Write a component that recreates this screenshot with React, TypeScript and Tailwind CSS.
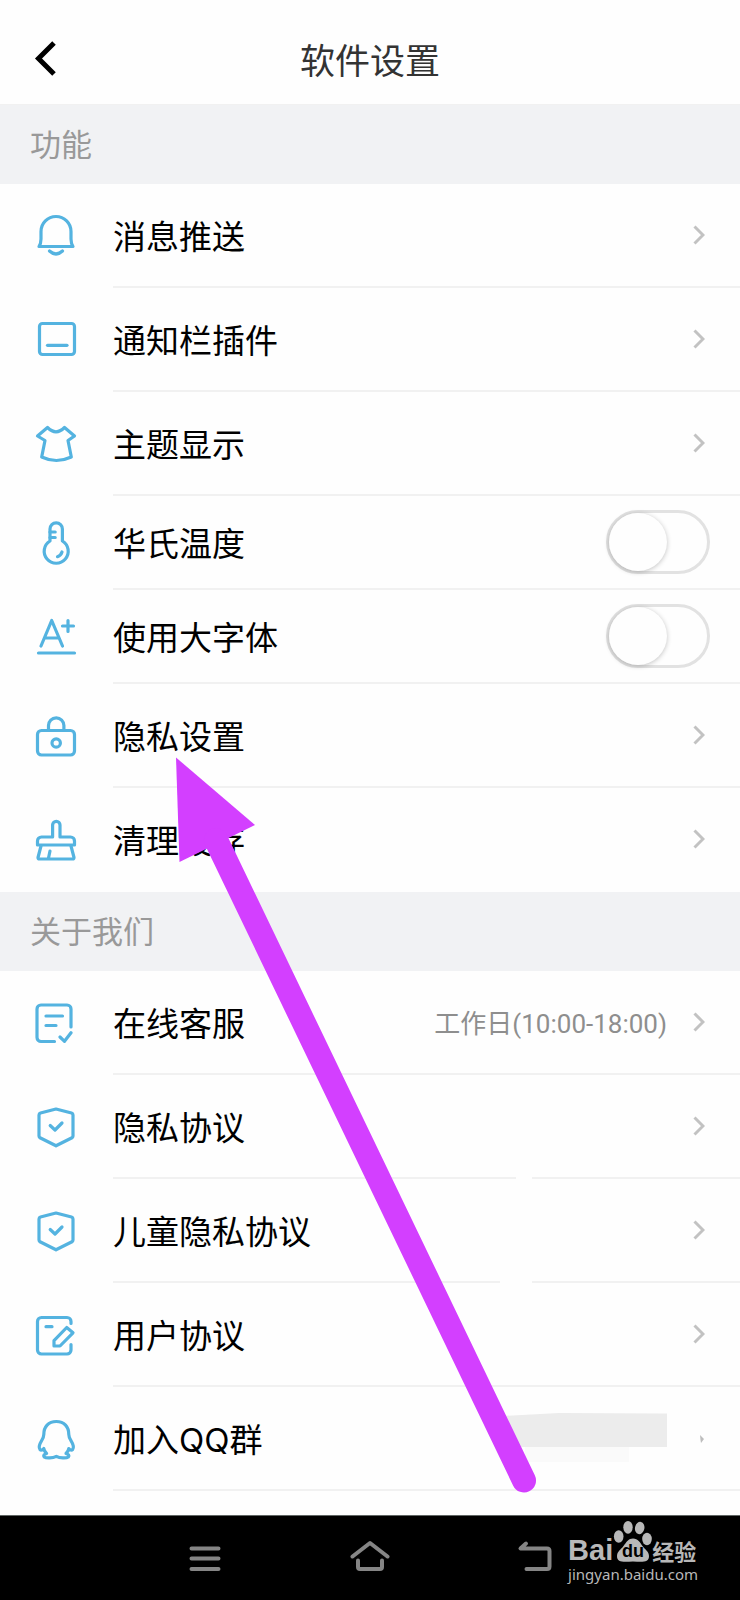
import React from 'react';

type Item = {
   label: string;
   icon: React.ReactNode;
   kind?: 'link' | 'switch';
   detail?: React.ReactNode;
   tinyArrow?: boolean;
   gap?: string;
};

const Icon = ({ children }: { children: React.ReactNode }) => (
   <svg
      viewBox="0 0 48 48"
      className="w-12 h-12 shrink-0 text-[#54b3e0]"
      fill="none"
      stroke="currentColor"
      strokeWidth="3.2"
      strokeLinecap="round"
      strokeLinejoin="round"
      aria-hidden="true"
   >
      {children}
   </svg>
);

const Bell = () => (
   <Icon>
      <path d="M7 34.500C8.600 32 9 30 9 27V19.500a15 15 0 0 1 30 0V27c0 3 .4 5 2 7.500Z" />
      <path d="M17.500 39q6.500 6 13 0" />
   </Icon>
);

const Panel = () => (
   <Icon>
      <rect x="7.500" y="7.500" width="35" height="31" rx="3" />
      <path d="M15.500 29.300H35" />
   </Icon>
);

const Shirt = () => (
   <Icon>
      <path d="M15.500 7.500q8.500 8.500 17 0L42.500 16 36 20.500l3.300 16.500q-15 7-29.600 0L13 20.500 5.500 16Z" />
   </Icon>
);

const Thermometer = () => (
   <Icon>
      <path d="M18 22V10a6.200 6.200 0 0 1 12.400 0v12a12 12 0 1 1-12.400 0Z" />
      <path d="M18 13h5.200M18 18.500h5.200M30 33q-1 3.500-4.500 4.700" />
   </Icon>
);

const LargeFont = () => (
   <Icon>
      <path d="M9 33 19.700 7.500 30.500 33M12.500 25h14.500M36 7.500v11M30.500 13h11M6.500 40h36" />
   </Icon>
);

const Lock = () => (
   <Icon>
      <rect x="5.500" y="18.500" width="37" height="24.500" rx="4" />
      <path d="M16.500 18.500v-5a7.700 7.700 0 0 1 15.400 0v5" />
      <circle cx="24.200" cy="31" r="4.200" />
   </Icon>
);

const Brush = () => (
   <Icon>
      <path d="M20.600 21V9a3.700 3.700 0 0 1 7.400 0v12h10.500a4 4 0 0 1 4 4v4H5.500v-4a4 4 0 0 1 4-4Z" />
      <path d="M9 30 6 41.500q0 1.500 1.300 1.500h33.400q1.300 0 1.300-1.500L39 30M18 35l-1.700 8" />
   </Icon>
);

const Checklist = () => (
   <Icon>
      <path d="M22.500 42.500H9a4 4 0 0 1-4-4V10a4 4 0 0 1 4-4h26a4 4 0 0 1 4 4v18" />
      <path d="M14 17h16.500M14 26.500h10M28 38l4.500 4.300 6.500-8.500" />
   </Icon>
);

const Shield = () => (
   <Icon>
      <path d="M24 6 39.500 10q1.500.5 1.500 2V33q0 1.200-1 1.800L24 42.800 8 34.800q-1-.6-1-1.800V12q0-1.500 1.500-2Z" />
      <path d="M18.200 22.500l4.800 4.500 7-7" />
   </Icon>
);

const Pencil = () => (
   <Icon>
      <path d="M39 12.500V10.500a4 4 0 0 0-4-4H9.500a4 4 0 0 0-4 4V39a4 4 0 0 0 4 4H35a4 4 0 0 0 4-4V33.500" />
      <path d="M14 15.700h6M22 35v-5.300L34.700 16.500l6.300 5.300L28 35Z" />
   </Icon>
);

const Penguin = () => (
   <Icon>
      <path d="M24.300 6.500c-8 0-12.500 5.500-12.500 13 0 2.500-.8 4-2.300 6.300C7.200 29.500 6.500 32.500 8 34.500c1 1 2.500.5 3.800-1 .3 2 1.200 3.600 2.800 5-2.600.8-3.600 2-2.400 3.500 2 1.400 8.500 1.200 12.100-.6 3.600 1.800 10.100 2 12.100.6 1.200-1.500.2-2.700-2.400-3.500 1.600-1.400 2.500-3 2.800-5 1.300 1.500 2.800 2 3.800 1 1.500-2 .8-5-1.500-8.700-1.500-2.300-2.300-3.800-2.300-6.300 0-7.500-4.500-13-12.500-13Z" />
   </Icon>
);

// number hidden behind a grey smear
const Smear = () => (
   <svg viewBox="0 0 166 52" className="w-[166px] h-[52px]" aria-hidden="true">
      <path d="M24 35H128V50H24Z" fill="#fafafa" />
      <path d="M0 4 58 1 166 1.500V35H0Z" fill="#ececec" />
   </svg>
);

const functions: Item[] = [
   { label: '消息推送', icon: <Bell /> },
   { label: '通知栏插件', icon: <Panel /> },
   { label: '主题显示', icon: <Shirt /> },
   { label: '华氏温度', icon: <Thermometer />, kind: 'switch' },
   { label: '使用大字体', icon: <LargeFont />, kind: 'switch' },
   { label: '隐私设置', icon: <Lock /> },
   { label: '清理缓存', icon: <Brush /> },
];

const about: Item[] = [
   { label: '在线客服', icon: <Checklist />, detail: '工作日(10:00-18:00)' },
   { label: '隐私协议', icon: <Shield />, gap: 'right-[208px] w-4' },
   { label: '儿童隐私协议', icon: <Shield />, gap: 'right-[208px] w-8' },
   { label: '用户协议', icon: <Pencil /> },
   { label: '加入QQ群', icon: <Penguin />, detail: <Smear />, tinyArrow: true },
];

const Chevron = () => (
   <svg viewBox="0 0 12 20" className="w-3 h-5" fill="none" stroke="#c2c2c2" strokeWidth="3" aria-hidden="true">
      <path d="M1.500 1.500 10 10 1.500 18.500" />
   </svg>
);

const TinyArrow = () => (
   <svg viewBox="0 0 12 20" className="w-3 h-5" fill="#bdbdbd" aria-hidden="true">
      <path d="M7 7 11 11 8 15 7.500 12Z" />
   </svg>
);

const Row = ({ item, last }: { item: Item; last: boolean }) => {
   const line = last ? 'border-transparent' : 'border-[#f1f1f1]';

   if (item.kind === 'switch') {
      return (
         <li>
            <label className="flex items-center pl-8 h-[94px]">
               {item.icon}
               <span className={`flex flex-1 items-center justify-between h-full ml-[33px] pr-[30px] border-b-2 ${line}`}>
                  <span className="pt-1 text-[33px] leading-[48px] text-black">{item.label}</span>
                  <input
                     type="checkbox"
                     role="switch"
                     className="appearance-none w-[104px] h-16 rounded-full border-[3px] border-[#e2e2e2] before:block before:w-[58px] before:h-[58px] before:rounded-full before:bg-[#fefefe] before:shadow-[0_1px_5px_rgba(0,0,0,0.24)] checked:bg-[#54b3e0] checked:before:ml-10"
                  />
               </span>
            </label>
         </li>
      );
   }

   return (
      <li>
         <a href="#" className="flex items-center pl-8 h-[104px]">
            {item.icon}
            <span className={`relative flex flex-1 items-center justify-between h-full ml-[33px] pr-[35px] border-b-2 ${line}`}>
               <span className="pt-1 text-[33px] leading-[48px] text-black">{item.label}</span>
               <span className="flex items-center gap-[26px] text-[26px] text-[#8e8e8e] font-[Roboto,'Noto_Sans_CJK_SC',sans-serif]">
                  {typeof item.detail === 'string' ? <span className="pt-1">{item.detail}</span> : item.detail}
                  {item.tinyArrow ? <TinyArrow /> : <Chevron />}
               </span>
               {item.gap && <span className={`absolute -bottom-0.5 h-0.5 bg-[#fefefe] ${item.gap}`} />}
            </span>
         </a>
      </li>
   );
};

const Arrow = () => (
   <svg
      viewBox="176 757 362 737"
      className="absolute left-[176px] top-[757px] w-[362px] h-[737px] pointer-events-none"
      fill="#d33fff"
      aria-hidden="true"
   >
      <path d="M176 757.500 255 825 179.500 862Z" />
      <path d="M216 840 524 1480.500" stroke="#d33fff" strokeWidth="24" strokeLinecap="round" />
   </svg>
);

const Watermark = () => (
   <div className="absolute right-[42px] top-1 flex flex-col text-[#b8b8b8]">
      <div className="flex items-end">
         <span className="font-['Liberation_Sans',sans-serif] font-bold text-[29px] leading-6">Bai</span>
         <svg viewBox="0 0 39 42" className="w-[39px] h-[42px]" fill="#b8b8b8" aria-hidden="true">
            <ellipse cx="5.700" cy="16.500" rx="4.800" ry="6.200" />
            <ellipse cx="15" cy="7.300" rx="4.700" ry="6.400" />
            <ellipse cx="26.700" cy="8" rx="4.700" ry="6.200" transform="rotate(12 26.700 8)" />
            <ellipse cx="34" cy="19" rx="4.800" ry="6.200" />
            <path d="M20 18.500c5 0 7 4 9.500 7.500s6.500 5.500 6.500 10c0 7-7 6-16 5.500C11 42 4 43 4 36c0-4.500 3.500-6 6.500-10s5-7.500 9.500-7.500Z" />
            <text x="20" y="37" textAnchor="middle" fill="#000" fontSize="18" fontWeight="700" fontFamily="Liberation Sans">
               du
            </text>
         </svg>
         <span className="text-[22px] leading-5 font-bold">经验</span>
      </div>
      <span className="font-['Noto_Sans',sans-serif] text-[15px] leading-6">jingyan.baidu.com</span>
   </div>
);

const SectionTitle = ({ children }: { children: React.ReactNode }) => (
   <h2 className="flex items-center h-[79px] px-[30px] pt-px bg-[#f1f2f4] text-[31px] text-[#999999]">{children}</h2>
);

const App = () => {
   return (
      <div className="relative w-full bg-[#fefefe] font-[Inter,'Noto_Sans_CJK_SC',sans-serif]">
         <header className="grid grid-cols-[1fr_auto_1fr] items-center h-[104px] pt-4 px-8">
            <button type="button" aria-label="返回" className="w-8 h-10 -mt-1">
               <svg viewBox="0 0 32 40" className="w-8 h-10" fill="none" stroke="#000" strokeWidth="5">
                  <path d="M22 5 6.500 20.500 22 36" />
               </svg>
            </button>
            <h1 className="pt-0.5 text-[35px] leading-[52px] text-[#333333]">软件设置</h1>
         </header>

         <main className="pb-6">
            <section>
               <div className="border-t border-[#f1f1f1]">
                  <SectionTitle>功能</SectionTitle>
               </div>
               <ul>
                  {functions.map((item, i) => (
                     <Row key={item.label} item={item} last={i === functions.length - 1} />
                  ))}
               </ul>
            </section>
            <section>
               <SectionTitle>关于我们</SectionTitle>
               <ul>
                  {about.map((item) => (
                     <Row key={item.label} item={item} last={false} />
                  ))}
               </ul>
            </section>
         </main>

         <nav className="relative flex items-center justify-center gap-[125px] h-[85px] bg-black border-t border-[#5f6563]">
            <button type="button" aria-label="最近任务">
               <svg viewBox="0 0 40 40" className="w-10 h-10" stroke="#858585" strokeWidth="4" strokeLinecap="round">
                  <path d="M6.500 10.500h27M6.500 20.500h27M6.500 31h27" />
               </svg>
            </button>
            <button type="button" aria-label="主页">
               <svg viewBox="0 0 40 40" className="w-10 h-10" fill="none" stroke="#858585" strokeWidth="4" strokeLinecap="round" strokeLinejoin="round">
                  <path d="M2.500 18.500 20 5 37.500 18.500M8 22.500v6.500q0 2 2 2h20q2 0 2-2v-6.500" />
               </svg>
            </button>
            <button type="button" aria-label="后退">
               <svg viewBox="0 0 40 40" className="w-10 h-10" fill="none" stroke="#858585" strokeWidth="4" strokeLinecap="round" strokeLinejoin="round">
                  <path d="M11 5.500 5.500 10.500H32q2.500 0 2.500 2.500v15.500q0 2.500-2.500 2.500H11.500" />
               </svg>
            </button>
            <Watermark />
         </nav>

         <Arrow />
      </div>
   );
};

export default App;
